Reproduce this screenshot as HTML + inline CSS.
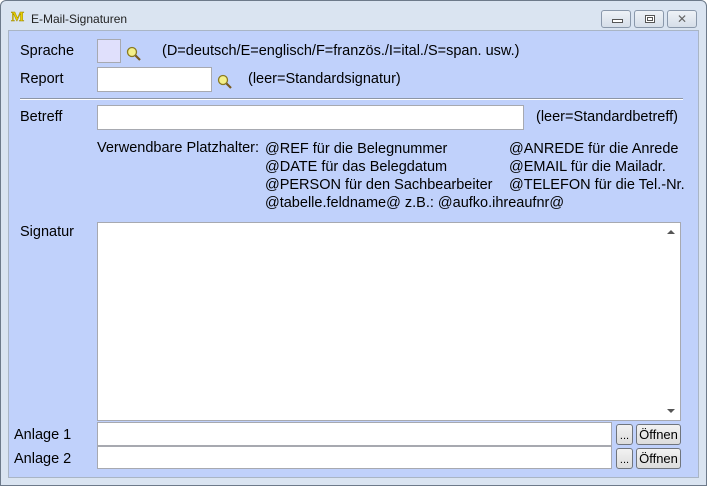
<!DOCTYPE html>
<html><head><meta charset="utf-8"><style>
*{margin:0;padding:0;box-sizing:border-box}
body{width:707px;height:486px;background:#fff;font-family:"Liberation Sans",Arial,sans-serif;font-size:14.5px;color:#000;position:relative;overflow:hidden}
.win{position:absolute;left:0;top:0;width:707px;height:486px;background:#dae4f1;border:1px solid #6d7a8a;border-radius:6px 6px 0 0}
.client{position:absolute;left:8px;top:30px;width:691px;height:448px;background:#c0d1fb;border:1px solid #a9b5c5}
.a{position:absolute;white-space:nowrap}
.in{position:absolute;background:#fff;border:1px solid #a7a9b0}
.btn{position:absolute;border:1px solid #70757d;border-radius:3px;background:linear-gradient(#f2f2f2,#dcdcdc);font-size:13px;text-align:center}
.tb{position:absolute;top:9px;height:18px;border:1px solid #8a98ab;border-radius:3px;background:linear-gradient(#eef2f7,#d6dee9)}
</style></head><body>
<div class="win">
<div class="a" style="left:10px;top:9px;font-family:'Liberation Serif',serif;font-weight:bold;color:#e8d000;font-size:14px;-webkit-text-stroke:0.5px #a08a00">M</div>
<div class="a" style="left:30px;top:11px;font-size:12px;color:#222">E-Mail-Signaturen</div>
<div class="tb" style="left:600px;width:30px"><div style="position:absolute;left:10px;top:8px;width:11px;height:4px;border:1px solid #555;background:#fff"></div></div>
<div class="tb" style="left:633px;width:30px"><div style="position:absolute;left:10px;top:4px;width:10px;height:8px;border:1px solid #555;background:#fff"><div style="margin:1px;height:4px;border:1px solid #555"></div></div></div>
<div class="tb" style="left:666px;width:30px;text-align:center;font-size:12px;line-height:16px;color:#666">✕</div>
</div>
<div class="client"></div>

<div class="a" style="left:20px;top:43px">Sprache</div>
<div class="in" style="left:97px;top:39px;width:24px;height:24px;background:#e0e0fc"></div>
<svg class="a" style="left:126px;top:46px" width="16" height="16"><circle cx="6" cy="6" r="4.5" fill="#f4f08a" stroke="#8a7a20" stroke-width="1.3"/><line x1="9.5" y1="9.5" x2="14" y2="14" stroke="#7a5a20" stroke-width="2.2"/></svg>
<div class="a" style="left:162px;top:43px">(D=deutsch/E=englisch/F=französ./I=ital./S=span. usw.)</div>

<div class="a" style="left:20px;top:71px">Report</div>
<div class="in" style="left:97px;top:67px;width:115px;height:25px"></div>
<svg class="a" style="left:217px;top:74px" width="16" height="16"><circle cx="6" cy="6" r="4.5" fill="#f4f08a" stroke="#8a7a20" stroke-width="1.3"/><line x1="9.5" y1="9.5" x2="14" y2="14" stroke="#7a5a20" stroke-width="2.2"/></svg>
<div class="a" style="left:248px;top:71px">(leer=Standardsignatur)</div>

<div class="a" style="left:20px;top:98px;width:663px;height:2px;border-top:1px solid #8d96a6;border-bottom:1px solid #fff"></div>

<div class="a" style="left:20px;top:109px">Betreff</div>
<div class="in" style="left:97px;top:105px;width:427px;height:25px"></div>
<div class="a" style="left:536px;top:109px">(leer=Standardbetreff)</div>

<div class="a" style="left:97px;top:140px">Verwendbare Platzhalter:</div>
<div class="a" style="left:265px;top:140px;line-height:18px">@REF für die Belegnummer<br>@DATE für das Belegdatum<br>@PERSON für den Sachbearbeiter<br>@tabelle.feldname@ z.B.: @aufko.ihreaufnr@</div>
<div class="a" style="left:509px;top:140px;line-height:18px">@ANREDE für die Anrede<br>@EMAIL für die Mailadr.<br>@TELEFON für die Tel.-Nr.</div>

<div class="a" style="left:20px;top:224px">Signatur</div>
<div class="in" style="left:97px;top:222px;width:584px;height:199px">
<div style="position:absolute;right:0;top:0;width:17px;height:197px;background:#fff"></div>
<div style="position:absolute;right:5px;top:7px;width:0;height:0;border-left:4px solid transparent;border-right:4px solid transparent;border-bottom:4px solid #555"></div>
<div style="position:absolute;right:5px;bottom:7px;width:0;height:0;border-left:4px solid transparent;border-right:4px solid transparent;border-top:4px solid #555"></div>
</div>

<div class="a" style="left:14px;top:427px">Anlage 1</div>
<div class="in" style="left:97px;top:422px;width:515px;height:24px"></div>
<div class="btn" style="left:616px;top:424px;width:17px;height:21px;line-height:22px;font-size:11px">...</div>
<div class="btn" style="left:636px;top:424px;width:45px;height:21px;line-height:19px">Öffnen</div>

<div class="a" style="left:14px;top:451px">Anlage 2</div>
<div class="in" style="left:97px;top:446px;width:515px;height:23px"></div>
<div class="btn" style="left:616px;top:448px;width:17px;height:21px;line-height:22px;font-size:11px">...</div>
<div class="btn" style="left:636px;top:448px;width:45px;height:21px;line-height:19px">Öffnen</div>
</body></html>
